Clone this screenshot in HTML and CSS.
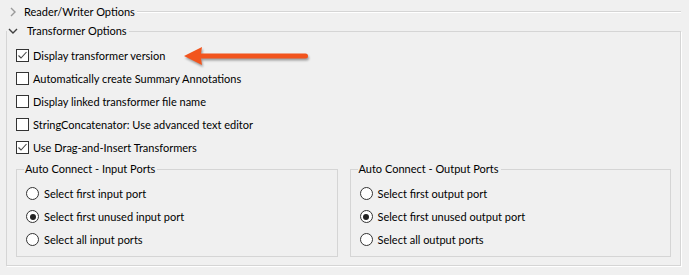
FILE: index.html
```html
<!DOCTYPE html>
<html lang="en">
<head>
    <meta charset="UTF-8">
    <title>Transformer Options</title>
    <link rel="stylesheet" href="styles.css">
</head>
<body>
    <div class="section-head">
        <svg class="chevron" width="8" height="10" viewBox="0 0 8 10"><polyline points="2,1 6,5 2,9" fill="none" stroke="#9a9a9a" stroke-width="1.4"/></svg>
        <span class="head-label">Reader/Writer Options</span>
        <div class="head-line"></div>
    </div>

    <fieldset class="section">
        <legend class="section-legend">
            <svg class="chevron open" width="10" height="8" viewBox="0 0 10 8"><polyline points="1,2 5,6 9,2" fill="none" stroke="#404040" stroke-width="1.4"/></svg>
            <span class="head-label">Transformer Options</span>
        </legend>
        <div class="section-body">
            <label class="check-row">
                <span class="box"><svg width="11" height="11" viewBox="0 0 11 11"><polyline points="1.5,5.5 4,8 9.5,2" fill="none" stroke="#444" stroke-width="1.1"/></svg></span>
                Display transformer version
            </label>
            <label class="check-row"><span class="box"></span>Automatically create Summary Annotations</label>
            <label class="check-row"><span class="box"></span>Display linked transformer file name</label>
            <label class="check-row"><span class="box"></span>StringConcatenator: Use advanced text editor</label>
            <label class="check-row">
                <span class="box"><svg width="11" height="11" viewBox="0 0 11 11"><polyline points="1.5,5.5 4,8 9.5,2" fill="none" stroke="#444" stroke-width="1.1"/></svg></span>
                Use Drag-and-Insert Transformers
            </label>

            <div class="groups">
                <fieldset class="group">
                    <legend class="group-legend">Auto Connect - Input Ports</legend>
                    <div class="group-body">
                        <label class="radio-row"><span class="radio"></span>Select first input port</label>
                        <label class="radio-row"><span class="radio on"></span>Select first unused input port</label>
                        <label class="radio-row"><span class="radio"></span>Select all input ports</label>
                    </div>
                </fieldset>
                <fieldset class="group">
                    <legend class="group-legend">Auto Connect - Output Ports</legend>
                    <div class="group-body">
                        <label class="radio-row"><span class="radio"></span>Select first output port</label>
                        <label class="radio-row"><span class="radio on"></span>Select first unused output port</label>
                        <label class="radio-row"><span class="radio"></span>Select all output ports</label>
                    </div>
                </fieldset>
            </div>
        </div>
    </fieldset>

    <!-- callout arrow pointing at the first option -->
    <svg class="callout" width="140" height="35" viewBox="0 0 140 35">
        <path d="M4,16 L22,7 L21,13.5 L125.5,13.5 A2.5,2.5 0 0 1 125.5,18.5 L21,18.5 L22,25 Z" fill="#f2541d"/>
    </svg>
</body>
</html>
```

FILE: styles.css
```css
body {
    margin: 0;
    padding: 3px 8px 0 6px;
    background-color: #f0f0f0;
    font-family: Lato, "Noto Sans", sans-serif;
    font-size: 11px;
    color: #000;
    position: relative;
    height: 275px;
    box-sizing: border-box;
}
.section-head {
    display: flex;
    align-items: center;
    height: 18px;
    margin-bottom: 2px;
}
.chevron {
    display: block;
    margin: 0 7px 0 3px;
}
.chevron.open {
    margin: 0 9px 0 1px;
}
.head-label {
    line-height: 16px;
    white-space: nowrap;
}
.head-line {
    flex: 1;
    margin-left: 2px;
    border-top: 1px solid #d5d5d5;
    border-bottom: 1px solid #fff;
}
.section {
    margin: 0;
    padding: 0;
    border: 1px solid #d5d5d5;
    box-shadow: 1px 1px 0 #fff;
}
.section-legend {
    display: flex;
    align-items: center;
    padding: 0 2px 0 0;
    height: 16px;
}
.section-body {
    padding: 5px 9px 8px 9px;
}
.check-row {
    display: flex;
    align-items: center;
    height: 23px;
    gap: 4px;
    white-space: nowrap;
}
.box {
    width: 11px;
    height: 11px;
    border: 1px solid #333;
    background: #fff;
    display: flex;
    align-items: center;
    justify-content: center;
}
.groups {
    display: grid;
    grid-template-columns: 1fr 1fr;
    gap: 12px;
    margin-top: 2px;
}
.group {
    margin: 0;
    padding: 0;
    border: 1px solid #d5d5d5;
    min-width: 0;
}
.group-legend {
    margin-left: 7px;
    padding: 0 2px 0 1px;
    line-height: 16px;
}
.group-body {
    padding: 5px 9px 5px 9px;
}
.radio-row {
    display: flex;
    align-items: center;
    height: 23px;
    gap: 5px;
    white-space: nowrap;
}
.radio {
    width: 11px;
    height: 11px;
    border: 1px solid #333;
    border-radius: 50%;
    background: #fff;
    display: flex;
    align-items: center;
    justify-content: center;
}
.radio.on::after {
    content: "";
    width: 6px;
    height: 6px;
    border-radius: 50%;
    background: #222;
}
.callout {
    position: absolute;
    left: 180px;
    top: 40px;
    filter: drop-shadow(1px 2px 1px rgba(0, 0, 0, 0.35));
}
```
